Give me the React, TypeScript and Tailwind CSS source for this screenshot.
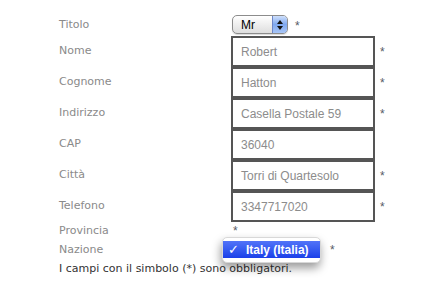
const fields = [
  { label: "Nome", value: "Robert", required: true },
  { label: "Cognome", value: "Hatton", required: true },
  { label: "Indirizzo", value: "Casella Postale 59", required: true },
  { label: "CAP", value: "36040", required: false },
  { label: "Città", value: "Torri di Quartesolo", required: true },
  { label: "Telefono", value: "3347717020", required: true },
];

function Star({ className = "" }: { className?: string }) {
  return (
    <span className={"font-['Liberation_Sans',sans-serif] text-[12px] leading-none text-[#555a66] " + className}>
      *
    </span>
  );
}

function MrSelect() {
  return (
    <div className="flex h-[19px] w-[56px] items-stretch overflow-hidden rounded-[5px] border border-[#8c8c8c] bg-gradient-to-b from-white to-[#dedede] shadow-[0_1px_1px_rgba(0,0,0,0.15)]">
      <div className="flex flex-1 items-center pl-[8px] font-['Liberation_Sans',sans-serif] text-[12px] text-black">
        Mr
      </div>
      <div className="flex w-[15px] flex-col items-center justify-center gap-[2px] border-l border-[#6d86c8] bg-gradient-to-b from-[#cfe0fb] via-[#7fa8ef] to-[#a9c6f7]">
        <svg width="6" height="4" viewBox="0 0 6 4">
          <path d="M3 0 L6 4 L0 4 Z" fill="#111" />
        </svg>
        <svg width="6" height="4" viewBox="0 0 6 4">
          <path d="M0 0 L6 0 L3 4 Z" fill="#111" />
        </svg>
      </div>
    </div>
  );
}

export default function App() {
  return (
    <div className="h-[297px] w-[443px] bg-white pl-[59px] pt-[15px] font-['DejaVu_Sans',sans-serif] text-[11px] text-[#8a8a8a]">
      <div className="grid grid-cols-[172px_144px_auto] items-center">
        <div className="flex h-[21px] items-center">Titolo</div>
        <div className="col-span-2 flex h-[21px] items-start gap-[7px] pl-[1px]">
          <MrSelect />
          <Star className="mt-[5px]" />
        </div>

        {fields.map((f) => (
          <div key={f.label} className="contents">
            <div className="flex h-[31px] items-center">{f.label}</div>
            <div className="flex h-[31px] items-center border-2 border-[#555555] bg-white pl-[8px] font-['Liberation_Sans',sans-serif] text-[12px] text-[#8c8c8c]">
              {f.value}
            </div>
            <div className="flex h-[31px] items-center pl-[5px]">
              {f.required && <Star />}
            </div>
          </div>
        ))}

        <div className="flex h-[19px] items-center">Provincia</div>
        <div className="col-span-2 flex h-[19px] items-start pl-[2px] pt-[3px]">
          <Star />
        </div>

        <div className="flex h-[18px] items-center">Nazione</div>
        <div className="relative col-span-2 flex h-[18px] items-center">
          <div className="absolute left-[-9px] top-[-4px] h-[26px] w-[99px] rounded-[5px] border border-[#d8d8d8] bg-white pt-[3px] shadow-[-1px_5px_10px_rgba(0,0,0,0.4)]">
            <div className="flex h-[17px] items-center bg-gradient-to-b from-[#5273f8] to-[#1b3fe9] pl-[5px] font-['Liberation_Sans',sans-serif] text-[12px] font-bold text-white">
              <span className="mr-[7px] font-['DejaVu_Sans',sans-serif] text-[13px] font-normal">✓</span>
              Italy (Italia)
            </div>
          </div>
          <Star className="ml-[99px] mt-[-1px]" />
        </div>
      </div>
      <div className="flex h-[20px] items-center text-[#333333]">
        I campi con il simbolo (*) sono obbligatori.
      </div>
    </div>
  );
}
